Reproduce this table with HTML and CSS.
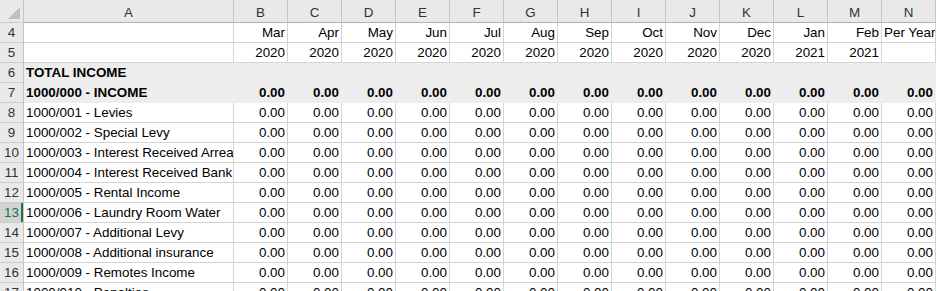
FILE: index.html
```html
<!DOCTYPE html>
<html>
<head>
<meta charset="utf-8">
<link rel="stylesheet" href="styles.css">
</head>
<body>
<div class="sheet">
  <div class="row hdr">
    <div class="rh corner"><span class="tri"></span></div>
    <div class="ch">A</div><div class="ch">B</div><div class="ch">C</div><div class="ch">D</div><div class="ch">E</div><div class="ch">F</div><div class="ch">G</div><div class="ch">H</div><div class="ch">I</div><div class="ch">J</div><div class="ch">K</div><div class="ch">L</div><div class="ch">M</div><div class="ch">N</div>
  </div>
  <div class="row">
    <div class="rh">4</div><div class="c"></div>
    <div class="c n">Mar</div><div class="c n">Apr</div><div class="c n">May</div><div class="c n">Jun</div><div class="c n">Jul</div><div class="c n">Aug</div><div class="c n">Sep</div><div class="c n">Oct</div><div class="c n">Nov</div><div class="c n">Dec</div><div class="c n">Jan</div><div class="c n">Feb</div><div class="c n">Per Year</div>
  </div>
  <div class="row">
    <div class="rh">5</div><div class="c"></div>
    <div class="c n">2020</div><div class="c n">2020</div><div class="c n">2020</div><div class="c n">2020</div><div class="c n">2020</div><div class="c n">2020</div><div class="c n">2020</div><div class="c n">2020</div><div class="c n">2020</div><div class="c n">2020</div><div class="c n">2021</div><div class="c n">2021</div><div class="c n"></div>
  </div>
  <div class="row fill">
    <div class="rh">6</div><div class="c b">TOTAL INCOME</div>
    <div class="c"></div><div class="c"></div><div class="c"></div><div class="c"></div><div class="c"></div><div class="c"></div><div class="c"></div><div class="c"></div><div class="c"></div><div class="c"></div><div class="c"></div><div class="c"></div><div class="c"></div>
  </div>
  <div class="row fill">
    <div class="rh">7</div><div class="c b">1000/000 - INCOME</div>
    <div class="c n b">0.00</div><div class="c n b">0.00</div><div class="c n b">0.00</div><div class="c n b">0.00</div><div class="c n b">0.00</div><div class="c n b">0.00</div><div class="c n b">0.00</div><div class="c n b">0.00</div><div class="c n b">0.00</div><div class="c n b">0.00</div><div class="c n b">0.00</div><div class="c n b">0.00</div><div class="c n b">0.00</div>
  </div>
  <div class="row">
    <div class="rh">8</div><div class="c">1000/001 - Levies</div>
    <div class="c n">0.00</div><div class="c n">0.00</div><div class="c n">0.00</div><div class="c n">0.00</div><div class="c n">0.00</div><div class="c n">0.00</div><div class="c n">0.00</div><div class="c n">0.00</div><div class="c n">0.00</div><div class="c n">0.00</div><div class="c n">0.00</div><div class="c n">0.00</div><div class="c n">0.00</div>
  </div>
  <div class="row">
    <div class="rh">9</div><div class="c">1000/002 - Special Levy</div>
    <div class="c n">0.00</div><div class="c n">0.00</div><div class="c n">0.00</div><div class="c n">0.00</div><div class="c n">0.00</div><div class="c n">0.00</div><div class="c n">0.00</div><div class="c n">0.00</div><div class="c n">0.00</div><div class="c n">0.00</div><div class="c n">0.00</div><div class="c n">0.00</div><div class="c n">0.00</div>
  </div>
  <div class="row">
    <div class="rh">10</div><div class="c">1000/003 - Interest Received Arrears</div>
    <div class="c n">0.00</div><div class="c n">0.00</div><div class="c n">0.00</div><div class="c n">0.00</div><div class="c n">0.00</div><div class="c n">0.00</div><div class="c n">0.00</div><div class="c n">0.00</div><div class="c n">0.00</div><div class="c n">0.00</div><div class="c n">0.00</div><div class="c n">0.00</div><div class="c n">0.00</div>
  </div>
  <div class="row">
    <div class="rh">11</div><div class="c">1000/004 - Interest Received Bank</div>
    <div class="c n">0.00</div><div class="c n">0.00</div><div class="c n">0.00</div><div class="c n">0.00</div><div class="c n">0.00</div><div class="c n">0.00</div><div class="c n">0.00</div><div class="c n">0.00</div><div class="c n">0.00</div><div class="c n">0.00</div><div class="c n">0.00</div><div class="c n">0.00</div><div class="c n">0.00</div>
  </div>
  <div class="row">
    <div class="rh">12</div><div class="c">1000/005 - Rental Income</div>
    <div class="c n">0.00</div><div class="c n">0.00</div><div class="c n">0.00</div><div class="c n">0.00</div><div class="c n">0.00</div><div class="c n">0.00</div><div class="c n">0.00</div><div class="c n">0.00</div><div class="c n">0.00</div><div class="c n">0.00</div><div class="c n">0.00</div><div class="c n">0.00</div><div class="c n">0.00</div>
  </div>
  <div class="row">
    <div class="rh sel">13</div><div class="c">1000/006 - Laundry Room Water</div>
    <div class="c n">0.00</div><div class="c n">0.00</div><div class="c n">0.00</div><div class="c n">0.00</div><div class="c n">0.00</div><div class="c n">0.00</div><div class="c n">0.00</div><div class="c n">0.00</div><div class="c n">0.00</div><div class="c n">0.00</div><div class="c n">0.00</div><div class="c n">0.00</div><div class="c n">0.00</div>
  </div>
  <div class="row">
    <div class="rh">14</div><div class="c">1000/007 - Additional Levy</div>
    <div class="c n">0.00</div><div class="c n">0.00</div><div class="c n">0.00</div><div class="c n">0.00</div><div class="c n">0.00</div><div class="c n">0.00</div><div class="c n">0.00</div><div class="c n">0.00</div><div class="c n">0.00</div><div class="c n">0.00</div><div class="c n">0.00</div><div class="c n">0.00</div><div class="c n">0.00</div>
  </div>
  <div class="row">
    <div class="rh">15</div><div class="c">1000/008 - Additional insurance</div>
    <div class="c n">0.00</div><div class="c n">0.00</div><div class="c n">0.00</div><div class="c n">0.00</div><div class="c n">0.00</div><div class="c n">0.00</div><div class="c n">0.00</div><div class="c n">0.00</div><div class="c n">0.00</div><div class="c n">0.00</div><div class="c n">0.00</div><div class="c n">0.00</div><div class="c n">0.00</div>
  </div>
  <div class="row">
    <div class="rh">16</div><div class="c">1000/009 - Remotes Income</div>
    <div class="c n">0.00</div><div class="c n">0.00</div><div class="c n">0.00</div><div class="c n">0.00</div><div class="c n">0.00</div><div class="c n">0.00</div><div class="c n">0.00</div><div class="c n">0.00</div><div class="c n">0.00</div><div class="c n">0.00</div><div class="c n">0.00</div><div class="c n">0.00</div><div class="c n">0.00</div>
  </div>
  <div class="row">
    <div class="rh">17</div><div class="c">1000/010 - Penalties</div>
    <div class="c n">0.00</div><div class="c n">0.00</div><div class="c n">0.00</div><div class="c n">0.00</div><div class="c n">0.00</div><div class="c n">0.00</div><div class="c n">0.00</div><div class="c n">0.00</div><div class="c n">0.00</div><div class="c n">0.00</div><div class="c n">0.00</div><div class="c n">0.00</div><div class="c n">0.00</div>
  </div>
</div>
</body>
</html>
```
FILE: styles.css
```css
html, body {
  margin: 0;
  padding: 0;
  background: #ffffff;
  overflow: hidden;
}
.sheet {
  font-family: "Liberation Sans", Arial, sans-serif;
  font-size: 13.4px;
  color: #000;
  width: 937px;
}
.row {
  display: grid;
  grid-template-columns: 24px 210px repeat(13, 54px);
  height: 20px;
}
.row > div {
  box-sizing: border-box;
  border-right: 1px solid #d4d4d4;
  border-bottom: 1px solid #d4d4d4;
  line-height: 19px;
  white-space: nowrap;
  overflow: hidden;
}
.c {
  padding: 0 2px;
}
.n { text-align: right; }
.b { font-weight: bold; }
.fill .c {
  background: #ededed;
  border-color: #ededed;
}
.row > .rh {
  background: #e9e9e9;
  color: #333;
  text-align: center;
  border-right-color: #c4c4c4;
  border-bottom-color: #cbcbcb;
}
.row > .rh.sel {
  background: #d3d3d3;
  color: #217346;
  box-shadow: inset -2px 0 0 #217346;
}
.hdr {
  height: 23px;
}
.hdr > div {
  background: #e9e9e9;
  color: #333;
  text-align: center;
  padding-top: 3px;
  border-right-color: #c4c4c4;
  border-bottom-color: #b0b0b0;
}
.hdr > .corner {
  position: relative;
}
.tri {
  position: absolute;
  right: 3px;
  bottom: 3px;
  width: 0;
  height: 0;
  border-left: 12px solid transparent;
  border-bottom: 12px solid #bfbfbf;
}
```
